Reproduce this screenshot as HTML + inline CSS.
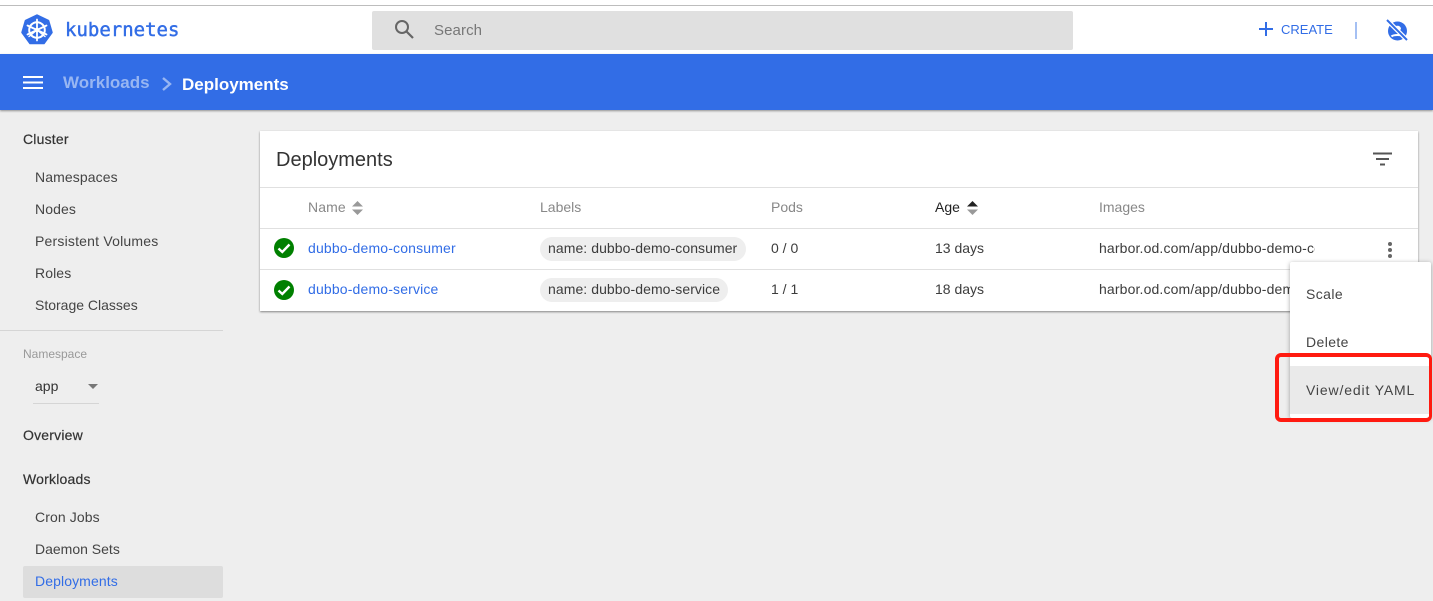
<!DOCTYPE html>
<html><head><meta charset="utf-8"><style>
html,body{margin:0;padding:0;width:1433px;height:601px;overflow:hidden;background:#eee;font-family:"Liberation Sans",sans-serif;font-size:14px;color:#3c3c3c}
.a{position:absolute;white-space:nowrap;line-height:16px}
.box{position:absolute}
.nav{color:#444;left:35px;letter-spacing:.1px}
.sec{color:#333;left:23px;letter-spacing:.2px;-webkit-text-stroke:.2px #333}
.h{color:#888}
.lnk{color:#326de6;letter-spacing:.16px}
.chip{position:absolute;background:#eee;border-radius:12px;height:24px;line-height:23px;padding-left:8px;color:#3c3c3c;white-space:nowrap;box-sizing:border-box;letter-spacing:.07px}
</style></head><body>
<div class="box" style="left:0;top:0;width:1433px;height:54px;background:#fff"></div>
<div class="box" style="left:0;top:5px;width:1433px;height:1px;background:#bdbdbd"></div>
<div class="box" style="left:0;top:54px;width:1433px;height:56px;background:#326de6;box-shadow:0 1px 2px rgba(0,0,0,.4)"></div>

<svg class="box" style="left:21px;top:14px" width="32" height="32" viewBox="0 0 32 32">
<path d="M16 1 L27.500 6.500 L31 18.500 L23 29.500 L9 29.500 L1 18.500 L4.500 6.500Z" fill="#326de6" stroke="#326de6" stroke-linejoin="round" stroke-width="1.500"/>
<circle cx="16" cy="16" r="7.800" fill="none" stroke="#fff" stroke-width="2"/>
<g stroke="#fff" stroke-width="1.800" stroke-linecap="round"><path d="M16 5.500V26.500M6.500 11.500L25.500 20.500M25.500 11.500L6.500 20.500"/><path d="M16 16L8 22.500M16 16L24 22.500" stroke-width="1.400"/></g>
<circle cx="16" cy="16" r="2.200" fill="#fff"/>
</svg>
<div class="a" style="left:65px;top:20px;font:normal 19px/20px 'DejaVu Sans Mono',monospace;color:#326de6;-webkit-text-stroke:.45px #326de6">kubernetes</div>

<div class="box" style="left:372px;top:11px;width:701px;height:39px;background:#e0e0e0;border-radius:2px"></div>
<svg class="box" style="left:392px;top:17px" width="24" height="24" viewBox="0 0 24 24"><circle cx="10" cy="10" r="6" fill="none" stroke="#666" stroke-width="2"/><path d="M14.500 14.500L21 21" stroke="#666" stroke-width="2.200"/></svg>
<div class="a" style="left:434px;top:23px;font-size:15px;color:#777;letter-spacing:.1px">Search</div>

<svg class="box" style="left:1258px;top:21px" width="16" height="16" viewBox="0 0 16 16"><path d="M8 1V15M1 8H15" stroke="#326de6" stroke-width="2"/></svg>
<div class="a" style="left:1281px;top:22px;font-size:13px;color:#326de6">CREATE</div>
<div class="box" style="left:1355px;top:22px;width:2px;height:17px;background:#a5c0f3"></div>
<svg class="box" style="left:1385px;top:19px" width="24" height="24" viewBox="0 0 24 24"><circle cx="12.500" cy="12" r="9.500" fill="#326de6"/><path d="M9 9.500a3.600 3.600 0 0 1 7 0a3.600 3.600 0 0 1-7 0z" fill="#fff"/><path d="M6.500 17.500c2-2 10-2 12 0" stroke="#fff" stroke-width="2" fill="none"/><path d="M2 1L22 21" stroke="#fff" stroke-width="4.500"/><path d="M2 1L22 21" stroke="#326de6" stroke-width="2"/></svg>

<svg class="box" style="left:23px;top:76px" width="20" height="13" viewBox="0 0 20 13"><path d="M0 1H20M0 6.500H20M0 12H20" stroke="#fff" stroke-width="2"/></svg>
<div class="a" style="left:63px;top:73px;font-size:17px;line-height:20px;font-weight:bold;color:#98b6f2">Workloads</div>
<svg class="box" style="left:160px;top:76px" width="13" height="16" viewBox="0 0 13 16"><path d="M3 2L10 8L3 14" fill="none" stroke="#98b6f2" stroke-width="2.400"/></svg>
<div class="a" style="left:182px;top:75px;font-size:17px;line-height:20px;font-weight:bold;color:#fff">Deployments</div>

<div class="a sec" style="top:131px">Cluster</div>
<div class="a nav" style="top:169px">Namespaces</div>
<div class="a nav" style="top:201px">Nodes</div>
<div class="a nav" style="top:233px;letter-spacing:.2px">Persistent Volumes</div>
<div class="a nav" style="top:265px">Roles</div>
<div class="a nav" style="top:297px;letter-spacing:0">Storage Classes</div>
<div class="box" style="left:0;top:330px;width:223px;height:1px;background:#d5d5d5"></div>
<div class="a" style="left:23px;top:346px;font-size:12px;color:#999">Namespace</div>
<div class="a" style="left:35px;top:378px;color:#333">app</div>
<svg class="box" style="left:88px;top:384px" width="10" height="6"><path d="M0 0H10L5 5Z" fill="#777"/></svg>
<div class="box" style="left:33px;top:403px;width:66px;height:1px;background:#d5d5d5"></div>
<div class="a sec" style="top:427px">Overview</div>
<div class="a sec" style="top:471px">Workloads</div>
<div class="a nav" style="top:509px">Cron Jobs</div>
<div class="a nav" style="top:541px;letter-spacing:0">Daemon Sets</div>
<div class="box" style="left:23px;top:566px;width:200px;height:32px;background:#ddd;border-radius:2px"></div>
<div class="a nav" style="top:573px;color:#326de6">Deployments</div>

<div class="box" style="left:260px;top:131px;width:1158px;height:180px;background:#fff;box-shadow:0 1px 2px rgba(0,0,0,.45)"></div>
<div class="a" style="left:276px;top:149px;font-size:20px;line-height:23px;color:#333">Deployments</div>
<svg class="box" style="left:1373px;top:152px" width="19" height="14" viewBox="0 0 19 14"><path d="M0 1.500H19M3 7H16M7 12.500H12" stroke="#555" stroke-width="2"/></svg>
<div class="box" style="left:260px;top:187px;width:1158px;height:1px;background:#e0e0e0"></div>
<div class="box" style="left:260px;top:228px;width:1158px;height:1px;background:#e0e0e0"></div>
<div class="box" style="left:260px;top:269px;width:1158px;height:1px;background:#e0e0e0"></div>

<div class="a h" style="left:308px;top:199px;letter-spacing:.1px">Name</div>
<svg class="box" style="left:352px;top:201px" width="11" height="14"><path d="M0 5.500L5.500 0L11 5.500ZM0 8.500H11L5.500 14Z" fill="#999"/></svg>
<div class="a h" style="left:540px;top:199px">Labels</div>
<div class="a h" style="left:771px;top:199px">Pods</div>
<div class="a" style="left:935px;top:199px;color:#222">Age</div>
<svg class="box" style="left:967px;top:201px" width="11" height="14"><path d="M0 5.500L5.500 0L11 5.500Z" fill="#222"/><path d="M0 8.500H11L5.500 14Z" fill="#999"/></svg>
<div class="a h" style="left:1099px;top:199px">Images</div>

<svg class="box" style="left:274px;top:238px" width="20" height="20" viewBox="0 0 20 20"><circle cx="10" cy="10" r="10" fill="#008000"/><path d="M4.500 10.500L8.300 14L15.500 6.500" fill="none" stroke="#fff" stroke-width="2.400"/></svg>
<svg class="box" style="left:274px;top:280px" width="20" height="20" viewBox="0 0 20 20"><circle cx="10" cy="10" r="10" fill="#008000"/><path d="M4.500 10.500L8.300 14L15.500 6.500" fill="none" stroke="#fff" stroke-width="2.400"/></svg>

<div class="a lnk" style="left:308px;top:240px">dubbo-demo-consumer</div>
<div class="a lnk" style="left:308px;top:281px">dubbo-demo-service</div>
<div class="chip" style="left:540px;top:237px;width:206px">name: dubbo-demo-consumer</div>
<div class="chip" style="left:540px;top:278px;width:188px">name: dubbo-demo-service</div>
<div class="a" style="left:771px;top:240px">0 / 0</div>
<div class="a" style="left:771px;top:281px">1 / 1</div>
<div class="a" style="left:935px;top:240px">13 days</div>
<div class="a" style="left:935px;top:281px">18 days</div>
<div class="a" style="left:1099px;top:240px;width:216px;overflow:hidden;letter-spacing:.14px">harbor.od.com/app/dubbo-demo-consumer</div>
<div class="a" style="left:1099px;top:281px;width:216px;overflow:hidden;letter-spacing:.14px">harbor.od.com/app/dubbo-demo-service</div>
<svg class="box" style="left:1387px;top:241px" width="6" height="18"><circle cx="3" cy="3" r="2" fill="#666"/><circle cx="3" cy="9" r="2" fill="#666"/><circle cx="3" cy="15" r="2" fill="#666"/></svg>

<div class="box" style="left:1290px;top:262px;width:141px;height:156px;background:#fff;box-shadow:0 1px 5px rgba(0,0,0,.35);border-radius:2px"></div>
<div class="box" style="left:1290px;top:366px;width:141px;height:48px;background:#eaeaea"></div>
<div class="a" style="left:1306px;top:286px;color:#444;letter-spacing:.4px">Scale</div>
<div class="a" style="left:1306px;top:334px;color:#444;letter-spacing:.4px">Delete</div>
<div class="a" style="left:1306px;top:382px;color:#444;letter-spacing:.85px">View/edit YAML</div>
<div class="box" style="left:1275px;top:353px;width:157px;height:69px;box-sizing:border-box;border:4px solid #ff1a10;border-right-width:3px;border-radius:6px"></div>
</body></html>
